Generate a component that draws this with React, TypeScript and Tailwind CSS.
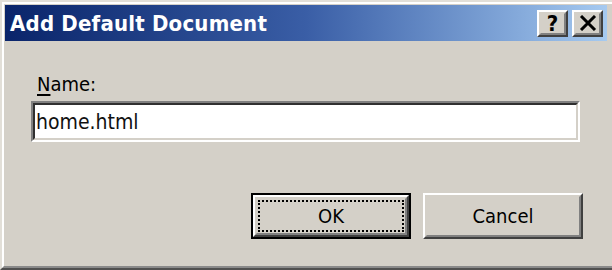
import React from "react";

const ui = { fontFamily: '"DejaVu Sans Condensed", "DejaVu Sans", Tahoma, sans-serif' };

function CaptionButton({ children }: { children: React.ReactNode }) {
  return (
    <div className="w-[31px] h-[27px] border-2 border-t-white border-l-white border-r-[#404040] border-b-[#404040] bg-[#d4d0c8]">
      <div className="h-full border-2 border-t-[#d4d0c8] border-l-[#d4d0c8] border-r-[#808080] border-b-[#808080] flex items-center justify-center">
        {children}
      </div>
    </div>
  );
}

export default function App() {
  return (
    <div className="w-[612px] h-[270px] bg-[#d4d0c8] border-t-2 border-l-2 border-b-2 border-t-[#e2dfd8] border-l-[#e2dfd8] border-b-[#505050] overflow-hidden" style={ui}>
      <div className="h-full border-t-2 border-l-2 border-b-2 border-t-white border-l-white border-b-[#8a8a8a] pt-px pl-px pr-[5px] flex flex-col">
        {/* Title bar */}
        <div className="h-[36px] shrink-0 bg-linear-to-r from-[#0a246a] via-[#3a5ea6] to-[#a6caf0] flex items-center pl-[5px] pr-[4px]">
          <span className="flex-1 text-white font-bold text-[22px] leading-none tracking-[0.2px] mt-[1px]">Add Default Document</span>
          <div className="flex gap-[4px]">
            <CaptionButton>
              <span className="text-black font-bold text-[22px] leading-none mt-[1px]">?</span>
            </CaptionButton>
            <CaptionButton>
              <svg width="18" height="16" viewBox="0 0 18 16">
                <path d="M2 1 L16 15 M16 1 L2 15" stroke="#000" strokeWidth="3" />
              </svg>
            </CaptionButton>
          </div>
        </div>

        {/* Body */}
        <div className="flex-1 flex flex-col pt-[31px] pl-[26px] pr-[20px] text-black">
          <label className="ml-[6px] text-[20px] leading-[24px]">
            <span className="underline underline-offset-[3px]">N</span>ame:
          </label>
          <div className="mt-[5px] w-[549px] h-[41px] border-2 border-t-[#808080] border-l-[#808080] border-r-white border-b-white">
            <div className="h-full border-2 border-t-[#303030] border-l-[#303030] border-r-[#d4d0c8] border-b-[#d4d0c8] bg-white flex items-center pl-[1px] pt-[1px]">
              <span className="text-[21px] leading-none text-[#111]">home.html</span>
            </div>
          </div>

          <div className="mt-[51px] flex justify-end gap-[12px] pr-[4px]">
            <button className="w-[160px] h-[46px] border-2 border-black bg-[#d4d0c8]">
              <div className="h-full border-2 border-t-white border-l-white border-r-[#404040] border-b-[#404040]">
                <div className="h-full border-2 border-t-[#d4d0c8] border-l-[#d4d0c8] border-r-[#808080] border-b-[#808080] p-[1px]">
                  <div className="h-full border-2 border-dotted border-black flex items-center justify-center text-[20px] leading-none">
                    OK
                  </div>
                </div>
              </div>
            </button>
            <button className="w-[160px] h-[46px] border-2 border-t-white border-l-white border-r-[#404040] border-b-[#404040] bg-[#d4d0c8]">
              <div className="h-full border-2 border-t-[#d4d0c8] border-l-[#d4d0c8] border-r-[#808080] border-b-[#808080] flex items-center justify-center text-[20px] leading-none">
                Cancel
              </div>
            </button>
          </div>
        </div>
      </div>
    </div>
  );
}
